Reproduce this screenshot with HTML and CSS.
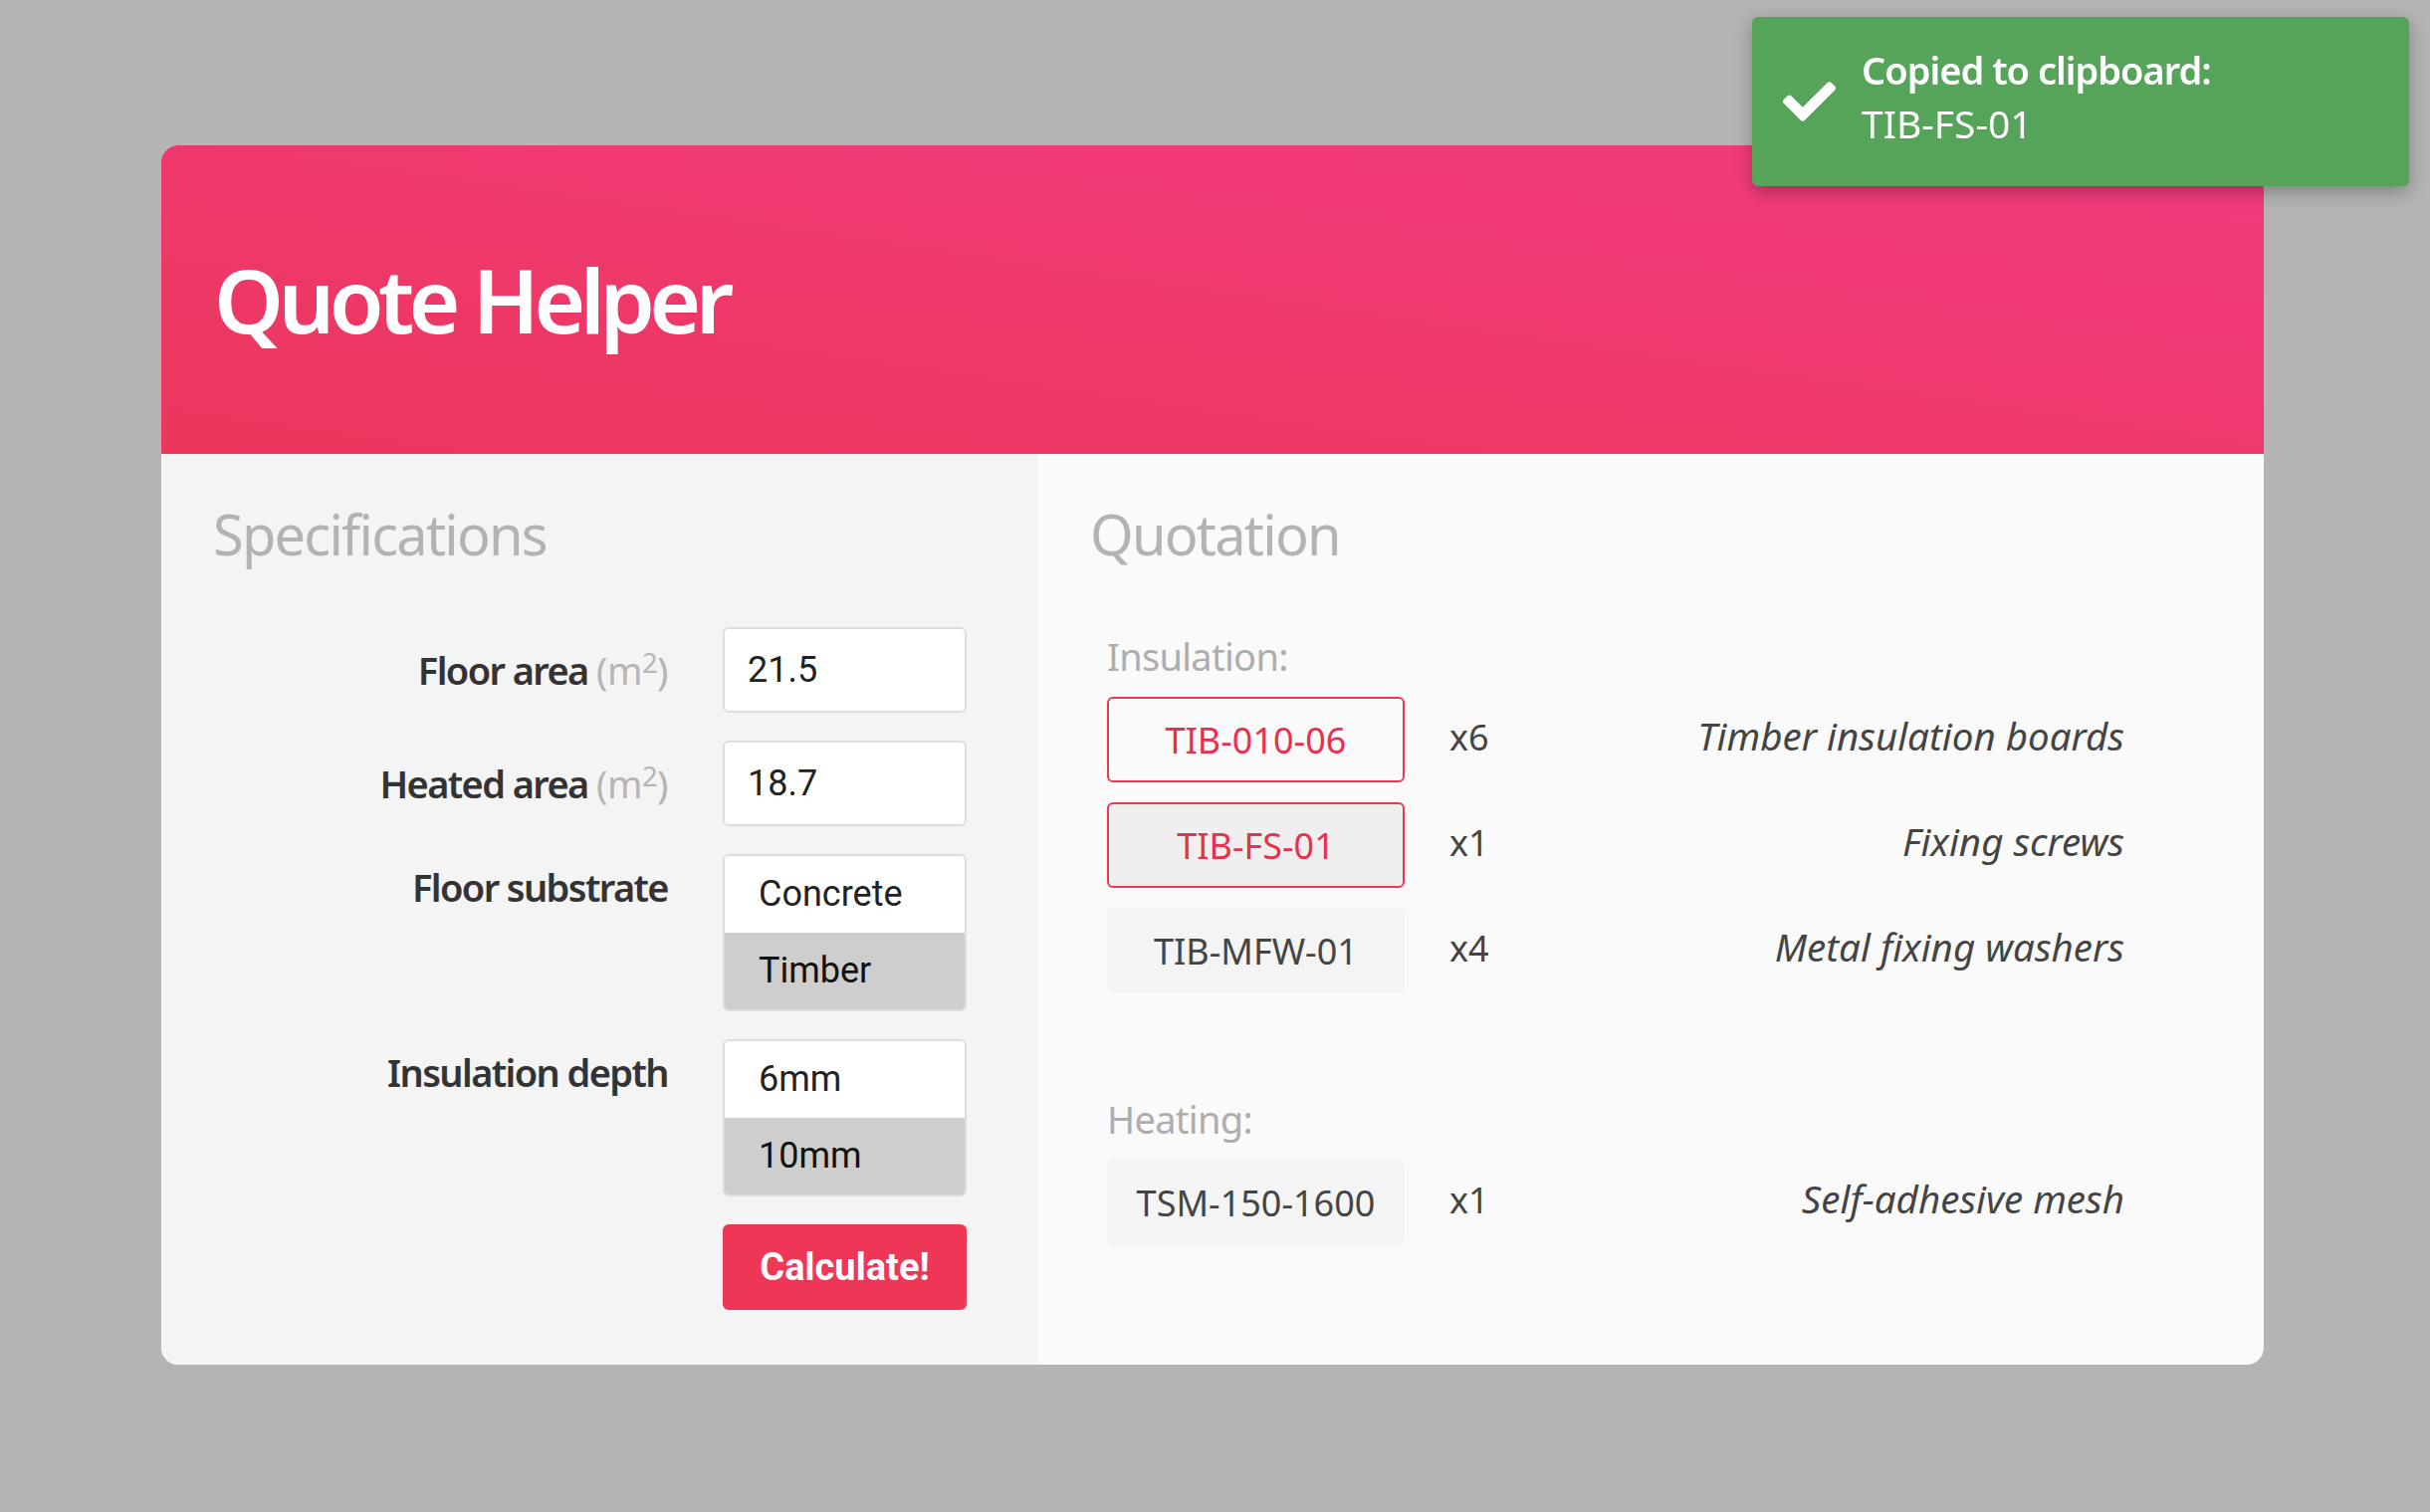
FILE: index.html
```html
<!DOCTYPE html>
<html lang="en">
<head>
<meta charset="utf-8">
<title>Quote Helper</title>
<link rel="stylesheet" href="styles.css">
</head>
<body>
<div class="toast" role="status">
  <svg class="toast-icon" viewBox="0 65 512 382" aria-hidden="true"><path d="M173.898 439.404l-166.4-166.4c-9.997-9.997-9.997-26.206 0-36.204l36.203-36.204c9.997-9.998 26.207-9.998 36.204 0L192 312.690 432.095 72.596c9.997-9.997 26.207-9.997 36.204 0l36.203 36.204c9.997 9.997 9.997 26.206 0 36.204l-294.4 294.401c-9.998 9.997-26.207 9.997-36.204-.001z"/></svg>
  <div class="toast-text">
    <div class="toast-title">Copied to clipboard:</div>
    <div class="toast-code">TIB-FS-01</div>
  </div>
</div>
<main class="card">
  <header class="card-header"><h1 class="title">Quote Helper</h1></header>
  <div class="card-body">
    <section class="specs">
      <h2 class="section-title">Specifications</h2>
      <form class="spec-form">
        <label class="field-label">Floor area <span class="unit">(m<sup>2</sup>)</span></label>
        <input class="text-input" type="text" value="21.5">
        <label class="field-label">Heated area <span class="unit">(m<sup>2</sup>)</span></label>
        <input class="text-input" type="text" value="18.7">
        <div class="field-label top">Floor substrate</div>
        <div class="listbox" role="listbox">
          <div class="option" role="option">Concrete</div>
          <div class="option selected" role="option">Timber</div>
        </div>
        <div class="field-label top">Insulation depth</div>
        <div class="listbox" role="listbox">
          <div class="option" role="option">6mm</div>
          <div class="option selected" role="option">10mm</div>
        </div>
        <div></div>
        <button class="calc-btn" type="button">Calculate!</button>
      </form>
    </section>
    <section class="quote">
      <h2 class="section-title">Quotation</h2>
      <div class="group">
        <div class="group-title">Insulation:</div>
        <div class="items">
          <div class="item"><span class="code flagged">TIB-010-06</span><span class="qty">x6</span><span class="desc">Timber insulation boards</span></div>
          <div class="item"><span class="code flagged copied">TIB-FS-01</span><span class="qty">x1</span><span class="desc">Fixing screws</span></div>
          <div class="item"><span class="code">TIB-MFW-01</span><span class="qty">x4</span><span class="desc">Metal fixing washers</span></div>
        </div>
      </div>
      <div class="group heating">
        <div class="group-title">Heating:</div>
        <div class="items">
          <div class="item"><span class="code">TSM-150-1600</span><span class="qty">x1</span><span class="desc">Self-adhesive mesh</span></div>
        </div>
      </div>
    </section>
  </div>
</main>
</body>
</html>
```

FILE: styles.css
```css
html, body {
  margin: 0;
}
body {
  background: #b4b4b4;
  font-family: "Noto Sans", "Open Sans", sans-serif;
  min-height: 1519px;
  box-sizing: border-box;
  padding: 146px 0 0 162px;
}

.card {
  width: 2112px;
  border-radius: 17px;
  overflow: hidden;
  background: #fafafa;
}

.card-header {
  height: 310px;
  display: flex;
  align-items: center;
  padding-left: 53px;
  background: linear-gradient(to top right, #eb375c, #f23b80);
}
.title {
  margin: 0;
  color: #fff;
  font-size: 89px;
  font-weight: 600;
  letter-spacing: -5.6px;
  line-height: 1.2;
}

.card-body {
  display: grid;
  grid-template-columns: 880px 1fr;
}

.section-title {
  margin: 0;
  font-size: 56px;
  line-height: 67px;
  font-weight: 400;
  letter-spacing: -1.8px;
  color: #b3b3b3;
}

.specs {
  background: #f4f4f4;
  padding: 47px 71px 55px 0;
}
.specs .section-title {
  padding-left: 52px;
}

.spec-form {
  margin-top: 60px;
  display: grid;
  grid-template-columns: 1fr 245px;
  column-gap: 55px;
  row-gap: 28px;
}
.field-label {
  text-align: right;
  font-size: 38px;
  font-weight: 600;
  letter-spacing: -1.6px;
  line-height: 67px;
  color: #333;
  align-self: center;
}
.field-label.top {
  align-self: start;
}
.unit {
  color: #b5b5b5;
  font-weight: 400;
  letter-spacing: -0.5px;
}
.unit sup {
  font-size: 0.72em;
  line-height: 0;
  vertical-align: 0.45em;
}

.text-input {
  box-sizing: border-box;
  width: 245px;
  height: 86px;
  margin: 0;
  padding: 0 0 0 23px;
  border: 2px solid #dedede;
  border-radius: 6px;
  background: #fff;
  font: 400 36px Roboto, "Liberation Sans", sans-serif;
  color: #222;
  outline: none;
}

.listbox {
  border: 2px solid #dedede;
  border-radius: 6px;
  overflow: hidden;
  background: #fff;
}
.option {
  height: 77px;
  padding-left: 34px;
  font: 400 36px/77px Roboto, "Liberation Sans", sans-serif;
  color: #222;
}
.option.selected {
  background: #cecece;
  color: #111;
}

.calc-btn {
  height: 86px;
  margin: 0;
  padding: 0;
  border: 0;
  border-radius: 6px;
  background: #ee3656;
  color: #fff;
  font: 700 38px Roboto, "Liberation Sans", sans-serif;
}

.quote {
  padding: 47px 140px 0 53px;
}
.group {
  margin-left: 17px;
  padding-top: 64px;
}
.group.heating {
  padding-top: 101px;
}
.group-title {
  margin: 0 0 16px;
  font-size: 38px;
  line-height: 50px;
  letter-spacing: -0.7px;
  color: #adadad;
}
.items {
  display: flex;
  flex-direction: column;
  gap: 20px;
}
.item {
  display: grid;
  grid-template-columns: 299px auto 1fr;
  column-gap: 45px;
  align-items: center;
}
.code {
  box-sizing: border-box;
  height: 86px;
  display: flex;
  align-items: center;
  justify-content: center;
  border-radius: 6px;
  background: #f4f4f4;
  color: #444;
  font-size: 36px;
}
.code.flagged {
  border: 2px solid #ee3656;
  background: transparent;
  color: #e8304f;
}
.code.flagged.copied {
  background: #efefef;
}
.qty {
  font-size: 36px;
  color: #444;
  margin-top: -6px;
}
.desc {
  text-align: right;
  font-style: italic;
  font-size: 38.5px;
  color: #444;
  margin-top: -8px;
}

.toast {
  position: fixed;
  top: 17px;
  left: 1760px;
  width: 660px;
  height: 170px;
  box-sizing: border-box;
  padding: 27px 0 0 31px;
  display: flex;
  align-items: flex-start;
  background: #55a459;
  border-radius: 6px;
  box-shadow: 0 6px 18px rgba(0, 0, 0, 0.28);
  color: #fff;
  z-index: 10;
}
.toast-icon {
  width: 53px;
  height: 40px;
  margin-top: 38px;
  fill: #fff;
  flex: none;
}
.toast-text {
  margin-left: 26px;
  line-height: 53px;
}
.toast-title {
  font-size: 38px;
  font-weight: 600;
  letter-spacing: -1px;
}
.toast-code {
  font-size: 39px;
}
```
